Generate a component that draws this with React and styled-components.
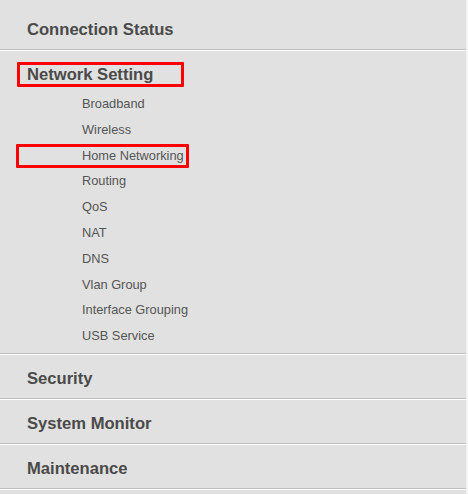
import React from "react";
import styled, { createGlobalStyle } from "styled-components";

const GlobalStyle = createGlobalStyle`
  html, body {
    margin: 0;
    padding: 0;
    background: #e1e1e1;
  }
`;

const Menu = styled.nav`
  width: 466px;
  height: 494px;
  background: #e1e1e1;
  border-right: 2px solid #f2f2f2;
  font-family: "Liberation Sans", Arial, sans-serif;
  overflow: hidden;
`;

const Section = styled.div`
  border-bottom: 1px solid #bdbdbd;
  box-shadow: 0 1px 0 #ffffff;
  margin-bottom: 1px;
`;

const Header = styled.div`
  position: relative;
  display: inline-block;
  padding: ${(p) => p.$top}px 0 ${(p) => p.$bottom}px 27px;
  font-size: 16.6px;
  font-weight: bold;
  line-height: 20px;
  color: #4a4a4a;
  white-space: nowrap;
`;

const Mark = styled.span`
  position: relative;
  &::after {
    content: "";
    position: absolute;
    left: ${(p) => p.$l}px;
    right: ${(p) => p.$r}px;
    top: ${(p) => p.$t}px;
    bottom: ${(p) => p.$b}px;
    border: 3px solid #ff0000;
    border-radius: 1px;
  }
`;

const SubList = styled.ul`
  list-style: none;
  margin: 0;
  padding: 1px 0 4px 82px;
`;

const SubItem = styled.li`
  height: 25.8px;
  line-height: 25.8px;
  font-size: 12.8px;
  color: #555555;
  white-space: nowrap;
`;

const subItems = [
  "Broadband",
  "Wireless",
  "Home Networking",
  "Routing",
  "QoS",
  "NAT",
  "DNS",
  "Vlan Group",
  "Interface Grouping",
  "USB Service",
];

export default function App() {
  return (
    <>
      <GlobalStyle />
      <Menu>
        <Section>
          <Header $top={20} $bottom={9}>Connection Status</Header>
        </Section>
        <Section>
          <Header $top={14} $bottom={5}>
            <Mark $l={-10} $r={-31} $t={-3} $b={-3}>Network Setting</Mark>
          </Header>
          <SubList>
            {subItems.map((item) => (
              <SubItem key={item}>
                {item === "Home Networking" ? (
                  <Mark $l={-66} $r={-5} $t={-4} $b={-5}>{item}</Mark>
                ) : (
                  item
                )}
              </SubItem>
            ))}
          </SubList>
        </Section>
        <Section>
          <Header $top={14} $bottom={9}>Security</Header>
        </Section>
        <Section>
          <Header $top={14} $bottom={9}>System Monitor</Header>
        </Section>
        <Section>
          <Header $top={14} $bottom={9}>Maintenance</Header>
        </Section>
      </Menu>
    </>
  );
}
